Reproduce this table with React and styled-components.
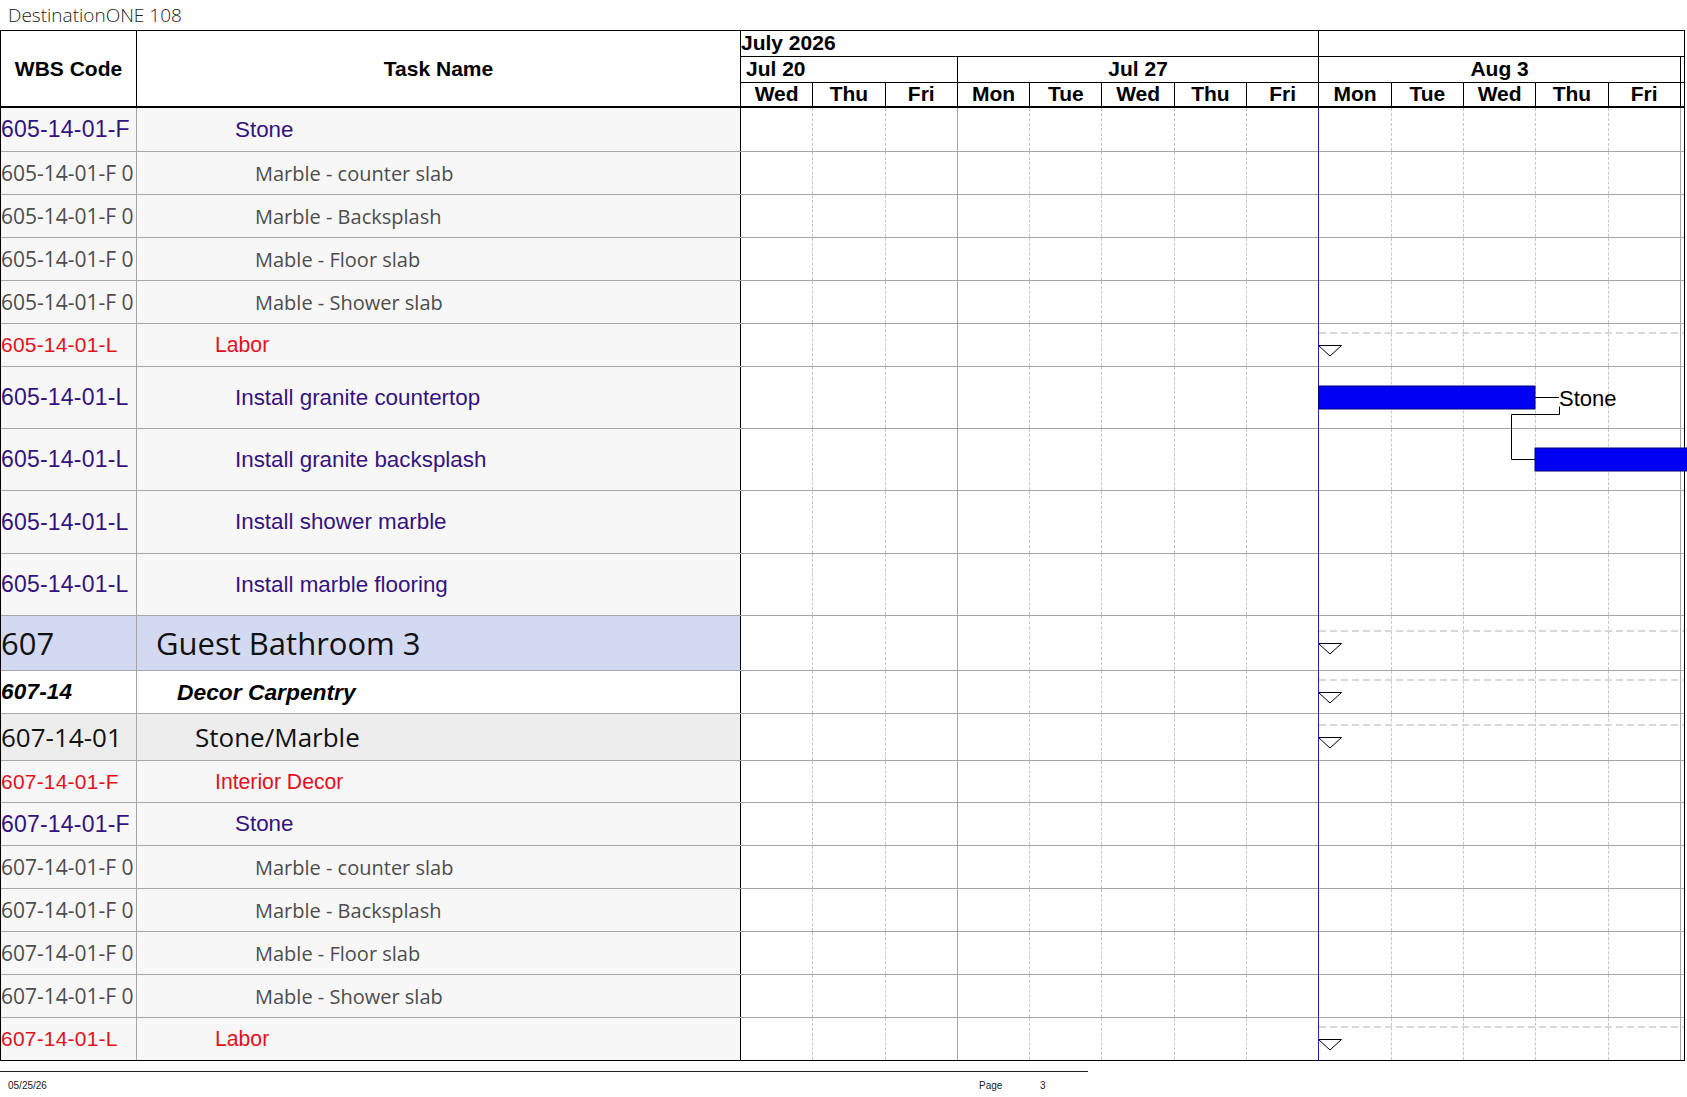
import React from 'react';
import styled, { createGlobalStyle } from 'styled-components';

const GlobalStyle = createGlobalStyle`
  html, body { margin: 0; padding: 0; background: #fff; }
  body { font-family: "Liberation Sans", Arial, sans-serif; color: #000; }
  * { box-sizing: border-box; }
`;

const SANS = '"Liberation Sans", Arial, sans-serif';
const OPEN = '"Open Sans", "Noto Sans", sans-serif';
const PURPLE = '#35137f';
const RED = '#e3101c';
const GRID = '#a6a6a6';
const STATUS_X = 1318.5;

const kinds = {
  stone: { family: SANS, code: 23, name: 22.4, color: PURPLE, indent: 98, bg: '#f7f7f7' },
  item: { family: OPEN, code: 21, name: 20, color: '#4d4d4d', indent: 118, bg: '#f7f7f7' },
  labor: { family: SANS, code: 21, name: 21.2, color: RED, indent: 78, bg: '#f7f7f7' },
  area: { family: OPEN, code: 31, name: 31, color: '#111', indent: 19, bg: '#d3d9f0' },
  group: { family: SANS, code: 22.5, name: 22.8, color: '#000', indent: 40, bg: '#fff', weight: 700, italic: true },
  sub: { family: OPEN, code: 26, name: 26, color: '#111', indent: 58, bg: '#ededed' },
};

const rows = [
  { code: '605-14-01-F', name: 'Stone', kind: 'stone', h: 44 },
  { code: '605-14-01-F 0', name: 'Marble - counter slab', kind: 'item', h: 43 },
  { code: '605-14-01-F 0', name: 'Marble - Backsplash', kind: 'item', h: 43 },
  { code: '605-14-01-F 0', name: 'Mable - Floor slab', kind: 'item', h: 43 },
  { code: '605-14-01-F 0', name: 'Mable - Shower slab', kind: 'item', h: 43 },
  { code: '605-14-01-L', name: 'Labor', kind: 'labor', h: 43, summary: true },
  { code: '605-14-01-L', name: 'Install granite countertop', kind: 'stone', h: 62, bar: [1318.5, 1535], label: 'Stone' },
  { code: '605-14-01-L', name: 'Install granite backsplash', kind: 'stone', h: 62, bar: [1535, 1690] },
  { code: '605-14-01-L', name: 'Install shower marble', kind: 'stone', h: 63 },
  { code: '605-14-01-L', name: 'Install marble flooring', kind: 'stone', h: 62 },
  { code: '607', name: 'Guest Bathroom 3', kind: 'area', h: 55, summary: true },
  { code: '607-14', name: 'Decor Carpentry', kind: 'group', h: 43, summary: true },
  { code: '607-14-01', name: 'Stone/Marble', kind: 'sub', h: 47, summary: true },
  { code: '607-14-01-F', name: 'Interior Decor', kind: 'labor', h: 42 },
  { code: '607-14-01-F', name: 'Stone', kind: 'stone', h: 43 },
  { code: '607-14-01-F 0', name: 'Marble - counter slab', kind: 'item', h: 43 },
  { code: '607-14-01-F 0', name: 'Marble - Backsplash', kind: 'item', h: 43 },
  { code: '607-14-01-F 0', name: 'Mable - Floor slab', kind: 'item', h: 43 },
  { code: '607-14-01-F 0', name: 'Mable - Shower slab', kind: 'item', h: 43 },
  { code: '607-14-01-L', name: 'Labor', kind: 'labor', h: 43, summary: true },
];

const days = ['Wed', 'Thu', 'Fri', 'Mon', 'Tue', 'Wed', 'Thu', 'Fri', 'Mon', 'Tue', 'Wed', 'Thu', 'Fri'];
const weekEnds = [2, 7, 12];

const Page = styled.div`
  width: 1687px;
  height: 1097px;
  overflow: hidden;
  position: relative;
`;

const Title = styled.div`
  height: 30px;
  padding-left: 8px;
  font-family: ${OPEN};
  font-weight: 300;
  font-size: 19px;
  line-height: 30px;
  color: #222;
`;

const Table = styled.div`
  width: 1685px;
  border-top: 1px solid #000;
  border-left: 1px solid #000;
  border-right: 1px solid #000;
`;

const Head = styled.div`
  display: grid;
  grid-template-columns: 136px 604px 1fr;
  height: 77px;
  border-bottom: 2px solid #000;
  font-family: ${SANS};
  font-weight: 700;
  font-size: 21px;
`;

const HeadLabel = styled.div`
  display: flex;
  align-items: center;
  justify-content: center;
  border-right: 1px solid #000;
`;

const Scale = styled.div`
  display: grid;
  grid-template-columns: repeat(13, 72.3px) 1fr;
  grid-template-rows: 26px 26px 1fr;
`;

const ScaleCell = styled.div`
  grid-column: span ${p => p.$span || 1};
  display: flex;
  align-items: center;
  justify-content: ${p => (p.$left ? 'flex-start' : 'center')};
  padding-left: ${p => p.$pad || 0}px;
  padding-bottom: 2px;
  border-right: ${p => (p.$edge ? '1px solid #000' : 'none')};
  border-bottom: ${p => (p.$under ? '1px solid #000' : 'none')};
  white-space: nowrap;
  line-height: 1;
`;

const Body = styled.div`
  position: relative;
`;

const Row = styled.div`
  display: grid;
  grid-template-columns: 136px 604px 1fr;
  height: ${p => p.$h}px;
  border-bottom: 1px solid ${p => (p.$last ? '#000' : GRID)};
`;

const Cell = styled.div`
  display: flex;
  align-items: center;
  overflow: hidden;
  white-space: nowrap;
  background: ${p => p.$k.bg};
  color: ${p => p.$k.color};
  font-family: ${p => p.$k.family};
  font-weight: ${p => p.$k.weight || 400};
  font-style: ${p => (p.$k.italic ? 'italic' : 'normal')};
`;

const CodeCell = styled(Cell)`
  font-size: ${p => p.$k.code}px;
  border-right: 1px solid ${GRID};
  letter-spacing: ${p => (p.$k.family === SANS ? '0.2px' : '0')};
`;

const NameCell = styled(Cell)`
  font-size: ${p => p.$k.name}px;
  padding-left: ${p => p.$k.indent}px;
  border-right: 1px solid #000;
`;

const Chart = styled.div`
  display: grid;
  grid-template-columns: repeat(13, 72.3px) 1fr;
  background: #fff;
`;

const Slot = styled.div`
  border-right: 1px ${p => (p.$week ? `solid ${GRID}` : 'dashed #c6c6c6')};
`;

const Tail = styled.div``;

const Overlay = styled.svg`
  position: absolute;
  left: 0;
  top: 0;
  overflow: visible;
  pointer-events: none;
`;

const Footer = styled.footer`
  margin-top: 10px;
  width: 1088px;
  border-top: 1px solid #222;
  display: grid;
  grid-template-columns: 971px 61px auto;
  padding: 8px 0 0 8px;
  font-family: "Liberation Sans Narrow", "Liberation Sans", sans-serif;
  font-size: 10px;
  color: #222;
`;

function Timescale() {
  return (
    <Scale>
      <ScaleCell $span={8} $left $edge $under>July 2026</ScaleCell>
      <ScaleCell $span={6} $under />
      <ScaleCell $span={3} $left $pad={5} $edge $under>Jul 20</ScaleCell>
      <ScaleCell $span={5} $edge $under>Jul 27</ScaleCell>
      <ScaleCell $span={5} $edge $under>Aug 3</ScaleCell>
      <ScaleCell $under />
      {days.map((d, i) => (
        <ScaleCell key={i} $edge>{d}</ScaleCell>
      ))}
      <ScaleCell />
    </Scale>
  );
}

function GanttLayer() {
  let y = 0;
  const laid = rows.map(r => {
    const top = y;
    y += r.h;
    return { ...r, c: top + (r.h - 1) / 2 };
  });
  const x = px => px - 1;

  return (
    <Overlay width={1683} height={y}>
      {laid.filter(r => r.summary).map((r, i) => (
        <g key={i}>
          <line x1={x(1319)} x2={x(1684)} y1={r.c - 12} y2={r.c - 12} stroke="#d8d8d8" strokeWidth="2" strokeDasharray="7 4" />
          <polygon
            points={`${x(1318.5)},${r.c + 0.5} ${x(1341.5)},${r.c + 0.5} ${x(1330)},${r.c + 11}`}
            fill="#fff"
            stroke="#000"
            strokeWidth="1"
          />
        </g>
      ))}
      <line x1={x(STATUS_X)} x2={x(STATUS_X)} y1={0} y2={y} stroke="#2323b0" strokeWidth="1" />
      {laid.filter(r => r.bar).map((r, i) => (
        <g key={i}>
          <rect
            x={x(r.bar[0])}
            y={r.c - 11.5}
            width={r.bar[1] - r.bar[0]}
            height={23}
            fill="#0000f2"
            stroke="#00007a"
            strokeWidth="1"
          />
          {r.label && (
            <>
              <line x1={x(r.bar[1])} x2={x(1559)} y1={r.c} y2={r.c} stroke="#000" strokeWidth="1" />
              <text x={x(1559)} y={r.c + 8} fontFamily={SANS} fontSize="22" fill="#000">
                {r.label}
              </text>
            </>
          )}
        </g>
      ))}
      <path
        d={`M${x(1559.5)} ${laid[6].c + 9} V${laid[6].c + 17} H${x(1511.5)} V${laid[7].c} H${x(1535)}`}
        fill="none"
        stroke="#000"
        strokeWidth="1"
      />
    </Overlay>
  );
}

export default function App() {
  return (
    <Page>
      <GlobalStyle />
      <Title>DestinationONE 108</Title>
      <Table>
        <Head>
          <HeadLabel>WBS Code</HeadLabel>
          <HeadLabel>Task Name</HeadLabel>
          <Timescale />
        </Head>
        <Body>
          {rows.map((r, i) => {
            const k = kinds[r.kind];
            return (
              <Row key={i} $h={r.h} $last={i === rows.length - 1}>
                <CodeCell $k={k}>{r.code}</CodeCell>
                <NameCell $k={k}>{r.name}</NameCell>
                <Chart>
                  {days.map((d, j) => (
                    <Slot key={j} $week={weekEnds.includes(j)} />
                  ))}
                  <Tail />
                </Chart>
              </Row>
            );
          })}
          <GanttLayer />
        </Body>
      </Table>
      <Footer>
        <span>05/25/26</span>
        <span>Page</span>
        <span>3</span>
      </Footer>
    </Page>
  );
}
